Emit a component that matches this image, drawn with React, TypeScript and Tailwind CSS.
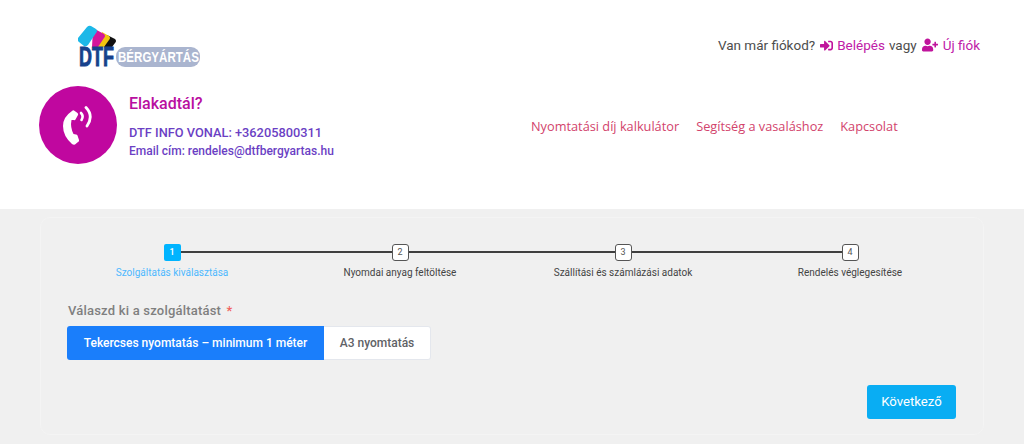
import { FaSignInAlt, FaUserPlus } from "react-icons/fa";

const steps = [
  { n: 1, label: "Szolgáltatás kiválasztása", width: "w-[228px]", active: true },
  { n: 2, label: "Nyomdai anyag feltöltése", width: "w-[228px]", active: false },
  { n: 3, label: "Szállítási és számlázási adatok", width: "w-[218px]", active: false },
  { n: 4, label: "Rendelés véglegesítése", width: "w-[236px]", active: false },
];

const Logo = () => (
  <div className="relative w-[124px] h-[44px]">
    <svg width="124" height="44" viewBox="0 0 124 44" className="absolute left-0 top-0">
      <path d="M26 22 L29 10 L37 14 Q39 16 37 18 L34 22 Z" fill="#111111" />
      <path d="M20 22 L24 7 L31 11 Q33 13 31 15 L26 22 Z" fill="#f2c40f" />
      <path d="M14 22 L15 3 L26 9 Q28 11 26 13 L20 22 Z" fill="#d4169b" />
      <path d="M0 13 L9 2 Q11 0 13 1 L18 4 Q20 6 18 8 L10 20 Q8 22 6 21 L1 17 Q-1 15 0 13 Z" fill="#1cb8e8" />
      <rect x="38" y="22" width="84" height="20" rx="9" fill="#aab5cf" />
    </svg>
    <span className="absolute left-[1px] top-[18px] font-['Liberation_Sans',sans-serif] font-bold text-[28px] leading-[28px] text-[#17418c] scale-x-[0.64] origin-left [-webkit-text-stroke:1px_#17418c]">
      DTF
    </span>
    <span className="absolute left-[40px] top-[24px] font-['Liberation_Sans',sans-serif] font-bold text-[15px] leading-[16px] text-white scale-x-[0.77] origin-left whitespace-nowrap">
      BÉRGYÁRTÁS
    </span>
  </div>
);

const PhoneIcon = () => (
  <svg width="32" height="40" viewBox="0 0 32 40" fill="none">
    <path
      d="M10 6 Q11 5 12 5.5 L15.5 8 Q16.5 9 16 10 L13.5 14.5 Q13 15.5 11.5 15 L9.5 15 Q8 22 11.5 29 L14 29.5 Q15 29.5 15.5 30.5 L17 35 Q17.5 36.5 16 37 L13 39.5 Q11.5 40 10 39 Q1 31 1 21 Q1 12 10 6 Z"
      fill="white"
    />
    <path d="M19 8 Q22 11 19.5 15" stroke="white" strokeWidth="2.6" strokeLinecap="round" />
    <path d="M24 2.5 Q32 11 25 21" stroke="white" strokeWidth="2.8" strokeLinecap="round" />
  </svg>
);

export default function App() {
  return (
    <div className="w-[1024px] h-[444px] overflow-hidden bg-[#f0f0f0] font-['Roboto',sans-serif]">
      {/* Header */}
      <div className="h-[209px] bg-white">
        <div className="flex justify-between pl-[78px] pr-[44px] pt-[25px]">
          <Logo />
          <div className="flex items-center h-[40px] text-[13.5px] text-[#4d4d4d] whitespace-nowrap">
            <span>Van már fiókod?</span>
            <FaSignInAlt className="ml-[5px] text-[#c0149c] text-[13px]" />
            <span className="ml-[4px] text-[#c020a8]">Belépés</span>
            <span className="ml-[4px]">vagy</span>
            <FaUserPlus className="ml-[5px] text-[#c0149c] text-[16px]" />
            <span className="ml-[5px] text-[#c020a8]">Új fiók</span>
          </div>
        </div>

        <div className="flex pl-[39px] pt-[17px]">
          <div className="w-[78px] h-[78px] rounded-full bg-[#c0079f] flex items-center justify-center">
            <PhoneIcon />
          </div>
          <div className="ml-[12px] w-[390px]">
            <div className="text-[16px] leading-[20px] pt-[8px] font-medium text-[#b90fa0]">Elakadtál?</div>
            <div className="mt-[10px] leading-[18px] font-medium text-[#6b3fc4] whitespace-nowrap">
              <div className="text-[12.8px]">DTF INFO VONAL: +36205800311</div>
              <div className="text-[12px]">Email cím: rendeles@dtfbergyartas.hu</div>
            </div>
          </div>
          <div className="flex gap-[17px] pt-[31px] ml-[12px] font-['Open_Sans',sans-serif] text-[12.75px] leading-[18px] text-[#d2436c] whitespace-nowrap">
            <span>Nyomtatási díj kalkulátor</span>
            <span>Segítség a vasaláshoz</span>
            <span>Kapcsolat</span>
          </div>
        </div>
      </div>

      {/* Card */}
      <div className="mt-[8px] ml-[40px] w-[944px] h-[218px] rounded-[10px] border border-[#f4f4f4] pt-[26px]">
        <div className="relative flex ml-[17px]">
          <div className="absolute left-[114px] top-[7px] w-[678px] h-[2px] bg-[#3f3f3f]" />
          {steps.map((s) => (
            <div key={s.n} className={`relative ${s.width} flex flex-col items-center`}>
              <div
                className={
                  s.active
                    ? "w-[17px] h-[17px] rounded-[2px] bg-[#00b4ff] text-white font-medium flex items-center justify-center text-[9px]"
                    : "w-[17px] h-[17px] rounded-[3px] bg-white border border-[#555555] text-[#555555] flex items-center justify-center text-[9px]"
                }
              >
                {s.n}
              </div>
              <div
                className={
                  s.active
                    ? "mt-[5px] text-[10px] leading-[14px] text-[#4db8ff] whitespace-nowrap"
                    : "mt-[5px] text-[10px] leading-[14px] text-[#444444] whitespace-nowrap"
                }
              >
                {s.label}
              </div>
            </div>
          ))}
        </div>

        <div className="ml-[27px] mt-[23px] text-[13px] leading-[16px] font-medium text-[#7f7f7f] tracking-[0.2px]">
          Válaszd ki a szolgáltatást <span className="ml-[2px] text-[#f0625f]">*</span>
        </div>
        <div className="ml-[26px] mt-[7px] flex h-[34px] text-[12px] font-medium">
          <div className="w-[257px] flex items-center justify-center rounded-l-[3px] bg-[#1a7efb] text-white">
            Tekercses nyomtatás – minimum 1 méter
          </div>
          <div className="w-[107px] flex items-center justify-center rounded-r-[3px] bg-white border border-[#e4e7ed] border-l-0 text-[#606266]">
            A3 nyomtatás
          </div>
        </div>

        <div className="flex justify-end mr-[27px] mt-[25px]">
          <div className="w-[89px] h-[34px] rounded-[3px] bg-[#09adf3] text-white text-[13.2px] flex items-center justify-center">
            Következő
          </div>
        </div>
      </div>
    </div>
  );
}
